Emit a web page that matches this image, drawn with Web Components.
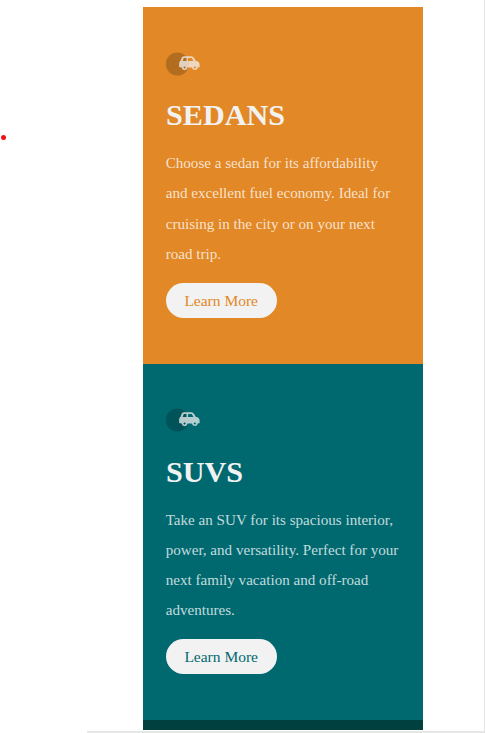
<!DOCTYPE html>
<html lang="en"><head><meta charset="utf-8"><title>Cars</title>
<style>html,body{margin:0;height:100%;overflow:hidden;background:#fff}</style></head><body>
<template id="card">
<style>
:host{display:block;box-sizing:border-box;height:356.4px;padding:44.7px 22.7px 0;background:var(--tone);color:#f2f2f2}
svg{display:block;width:36px;height:24px}
h2{margin:21.5px 0 0;font-size:30.2px;line-height:36px;font-weight:700;white-space:nowrap}
p{margin:14.9px 0 0 -.3px;font-size:15.1px;line-height:30.2px;color:rgba(255,255,255,.77);white-space:pre-line}
button{display:block;margin:13.9px 0 0 -.3px;width:111px;height:35px;padding:0;border:0;border-radius:18px;background:#f2f2f2;color:var(--tone);font:15.5px/35px "Liberation Serif","Times New Roman",serif;text-align:center}
</style>
<svg viewBox="0 0 36 24">
<circle cx="11.4" cy="12" r="11.6" fill="#000" fill-opacity=".2"/>
<path transform="translate(-.2 .4)" fill="#f2f2f2" fill-opacity=".75" fill-rule="evenodd" d="M18 3.8H25.5Q27.3 3.8 28.3 5.6L29.9 8.3Q33.8 9 33.8 12.3V14.8H32.1A3.1 3.1 0 0 1 26 15.2H21.9A3.1 3.1 0 0 1 15.8 15.2L13.3 14.5V11Q13.3 9 14.8 8.3L15.8 5.4Q16.4 3.8 18 3.8ZM17.9 5.7L16.9 8.5H20.7V5.7ZM22.3 5.7V8.5H27.6L26.1 5.7ZM18.8 14A1.1 1.1 0 1 0 18.8 16.2A1.1 1.1 0 1 0 18.8 14ZM29 14A1.1 1.1 0 1 0 29 16.2A1.1 1.1 0 1 0 29 14Z"/>
</svg>
<h2><slot name="title"></slot></h2><p><slot></slot></p><button><slot name="action"></slot></button>
</template>
<cars-page></cars-page>
<script>
customElements.define('car-card',class extends HTMLElement{
 constructor(){super();this.attachShadow({mode:'open'}).append(document.getElementById('card').content.cloneNode(true));}
});
customElements.define('cars-page',class extends HTMLElement{
 constructor(){super();this.attachShadow({mode:'open'}).innerHTML=`
<style>
:host{display:block;position:relative;box-sizing:border-box;width:485px;height:733px;overflow:hidden;padding:7.2px 0 0 143.3px;border-right:1px solid #e4e4e4;font-family:"Liberation Serif","Times New Roman",serif}
main{width:280px;height:723.3px;overflow:hidden}
.sedan{--tone:#e28826}.suv{--tone:#006970}
.next{height:12px;background:#004140}
.dot{position:absolute;left:1px;top:134.5px;width:5px;height:5px;border-radius:50%;background:#ee1118}
.edge{position:absolute;left:87px;right:0;top:730.5px;height:2.2px;background:#e6e6e6}
</style>
<main><car-card class="sedan"><span slot="title">SEDANS</span>Choose a sedan for its affordability
and excellent fuel economy. Ideal for
cruising in the city or on your next
road trip.<span slot="action">Learn More</span></car-card><car-card class="suv"><span slot="title">SUVS</span>Take an SUV for its spacious interior,
power, and versatility. Perfect for your
next family vacation and off-road
adventures.<span slot="action">Learn More</span></car-card><div class="next"></div></main>
<div class="dot"></div><div class="edge"></div>`;}
});
</script></body></html>
